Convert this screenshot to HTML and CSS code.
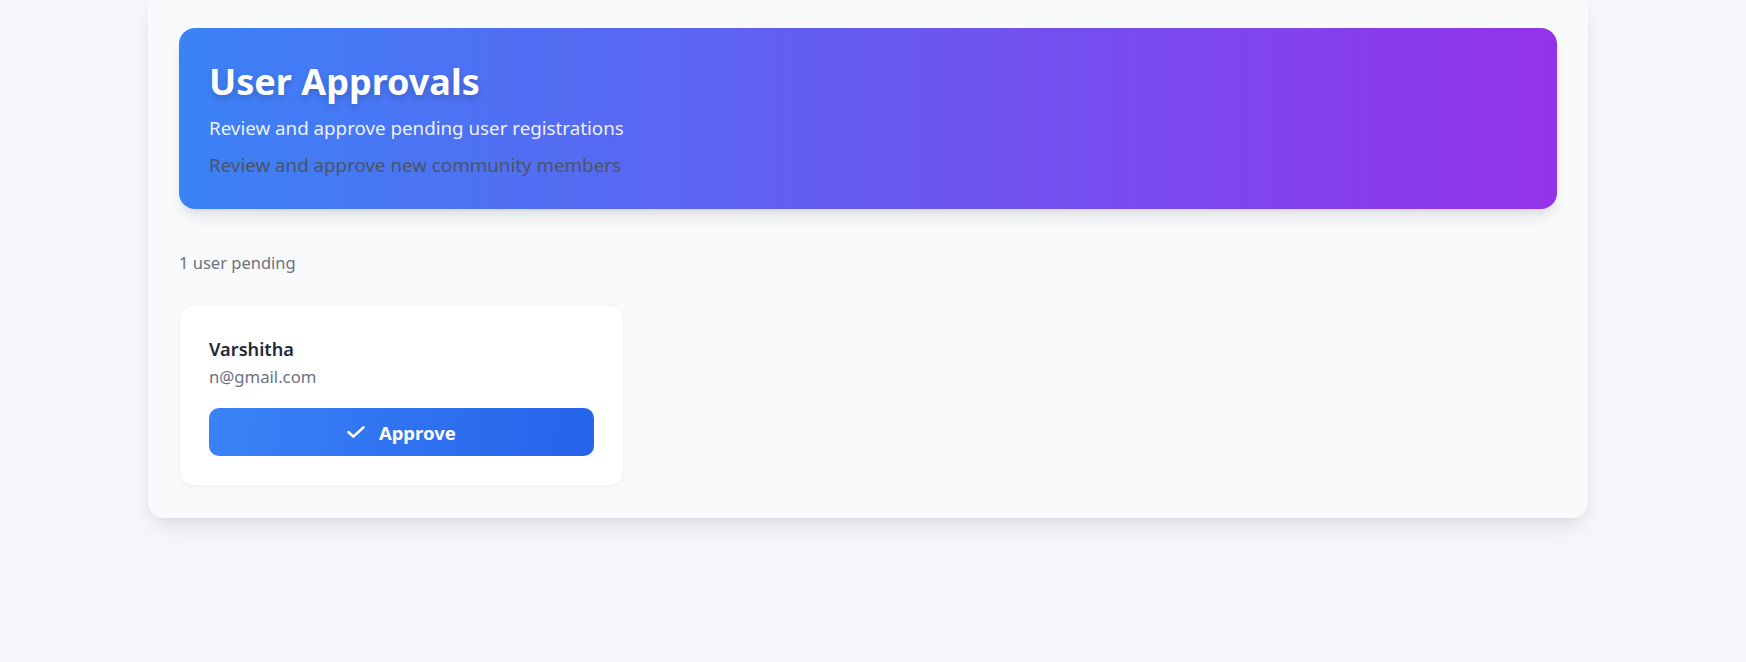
FILE: index.html
```html
<!DOCTYPE html>
<html lang="en">
<head>
<meta charset="utf-8">
<title>User Approvals</title>
<link rel="stylesheet" href="styles.css">
</head>
<body>
<div class="shell">
  <main class="panel">
    <header class="banner">
      <h1 class="banner-title">User Approvals</h1>
      <p class="banner-sub">Review and approve pending user registrations</p>
      <p class="banner-note">Review and approve new community members</p>
    </header>
    <p class="pending-count">1 user pending</p>
    <section class="user-grid">
      <article class="user-card">
        <h2 class="user-name">Varshitha</h2>
        <p class="user-email">n@gmail.com</p>
        <button class="approve-btn" type="button">
          <svg class="approve-icon" width="18" height="12" viewBox="0 0 18 12" aria-hidden="true">
            <path d="M1.6 6.2 L6.4 10.6 L16.4 1.4" fill="none" stroke="#ffffff" stroke-width="2.6" stroke-linecap="round" stroke-linejoin="round"/>
          </svg>
          <span>Approve</span>
        </button>
      </article>
    </section>
  </main>
</div>
</body>
</html>
```
FILE: styles.css
```css
* { box-sizing: border-box; }

html, body {
  margin: 0;
  padding: 0;
}

body {
  background: #f6f7fb;
  font-family: "Noto Sans", "Open Sans", sans-serif;
  color: #1f2937;
  height: 662px;
  overflow: hidden;
}

.shell {
  padding-right: 10px;
}

.panel {
  max-width: 1440px;
  margin: -4px auto 0;
  background: #f9fafb;
  border-radius: 16px;
  padding: 32px 31px;
  box-shadow: 0 12px 24px -6px rgba(17, 24, 39, 0.12), 0 4px 10px -4px rgba(17, 24, 39, 0.06);
}

.banner {
  background: linear-gradient(to right, #3b82f6, #9333ea);
  border-radius: 16px;
  padding: 34px 30px 30px;
  box-shadow: 0 10px 15px -3px rgba(0, 0, 0, 0.1), 0 4px 6px -4px rgba(0, 0, 0, 0.1);
  margin-bottom: 42px;
}

.banner-title {
  margin: 0;
  font-size: 36px;
  line-height: 40px;
  font-weight: 700;
  color: #ffffff;
  text-shadow: 0 3px 6px rgba(0, 0, 0, 0.18);
}

.banner-sub {
  margin: 12px 0 0;
  font-size: 18.75px;
  line-height: 28px;
  color: rgba(255, 255, 255, 0.92);
}

.banner-note {
  margin: 9px 0 0;
  font-size: 18.75px;
  line-height: 28px;
  color: #4b5563;
}

.pending-count {
  margin: 0 0 30px;
  font-size: 16.5px;
  line-height: 24px;
  color: #6b7280;
}

.user-grid {
  display: grid;
  grid-template-columns: repeat(3, 1fr);
  gap: 22px;
}

.user-card {
  background: #ffffff;
  border: 1px solid #f3f4f6;
  border-radius: 14px;
  padding: 29px;
  box-shadow: 0 1px 3px rgba(0, 0, 0, 0.04);
  display: flex;
  flex-direction: column;
}

.user-name {
  margin: 0;
  font-size: 18.2px;
  line-height: 28px;
  font-weight: 600;
  color: #1f2937;
}

.user-email {
  margin: 2px 0 0;
  font-size: 16.7px;
  line-height: 24px;
  color: #6b7280;
}

.approve-btn {
  margin-top: 19px;
  height: 48px;
  width: 100%;
  border: none;
  border-radius: 10px;
  background: linear-gradient(100deg, #3b82f6, #2563eb);
  color: #ffffff;
  font-family: inherit;
  font-size: 18.5px;
  font-weight: 700;
  display: flex;
  align-items: center;
  justify-content: center;
  gap: 14px;
  cursor: pointer;
}

.approve-icon {
  display: block;
  flex: none;
}
```
